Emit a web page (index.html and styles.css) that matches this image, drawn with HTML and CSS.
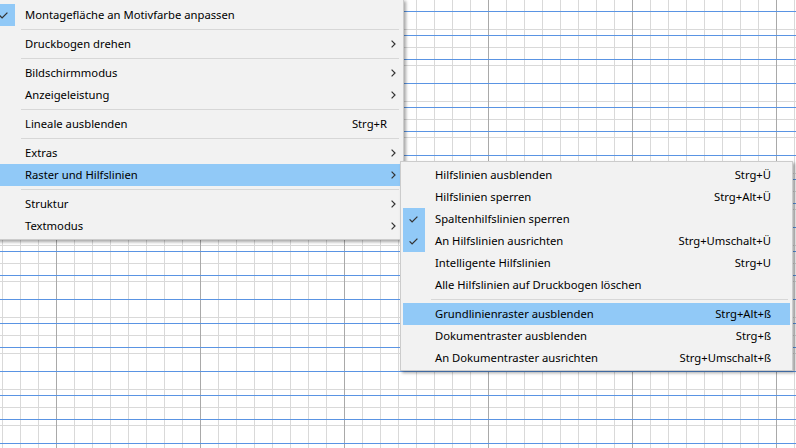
FILE: index.html
```html
<!DOCTYPE html>
<html lang="de">
<head>
<meta charset="utf-8">
<title>Menü</title>
<link rel="stylesheet" href="styles.css">
</head>
<body>
<div class="canvas">
  <svg class="grid" width="796" height="448" viewBox="0 0 796 448">
    <defs>
      <pattern id="gv" x="2" y="0" width="18" height="448" patternUnits="userSpaceOnUse"><rect x="0" y="0" width="1" height="448" fill="#d9d9d9"/></pattern>
      <pattern id="gh" x="0" y="11" width="796" height="18" patternUnits="userSpaceOnUse"><rect x="0" y="0" width="796" height="1" fill="#d9d9d9"/></pattern>
      <pattern id="mv" x="56" y="0" width="144" height="448" patternUnits="userSpaceOnUse"><rect x="0" y="0" width="1" height="448" fill="#a9a9a9"/></pattern>
      <pattern id="bl" x="0" y="11" width="796" height="24" patternUnits="userSpaceOnUse"><rect x="0" y="0" width="796" height="1" fill="#5a94e3"/></pattern>
    </defs>
    <rect width="796" height="448" fill="#ffffff"/>
    <rect width="796" height="448" fill="url(#gh)"/>
    <rect width="796" height="448" fill="url(#gv)"/>
    <rect width="796" height="448" fill="url(#mv)"/>
    <rect width="796" height="448" fill="url(#bl)"/>
  </svg>
  <div class="menu menu-main">
    <div class="item checked"><span class="chk"><svg width="9" height="7" viewBox="0 0 9 7"><polyline points="0.6,3.4 3.1,5.9 8.4,0.6"/></svg></span><span class="label">Montagefläche an Motivfarbe anpassen</span><span class="key"></span><span class="arr"></span></div>
    <div class="sep"></div>
    <div class="item"><span class="chk"></span><span class="label">Druckbogen drehen</span><span class="key"></span><span class="arr"><svg width="5" height="8" viewBox="0 0 5 8"><polyline points="0.6,0.6 4,4 0.6,7.4"/></svg></span></div>
    <div class="sep"></div>
    <div class="item"><span class="chk"></span><span class="label">Bildschirmmodus</span><span class="key"></span><span class="arr"><svg width="5" height="8" viewBox="0 0 5 8"><polyline points="0.6,0.6 4,4 0.6,7.4"/></svg></span></div>
    <div class="item"><span class="chk"></span><span class="label">Anzeigeleistung</span><span class="key"></span><span class="arr"><svg width="5" height="8" viewBox="0 0 5 8"><polyline points="0.6,0.6 4,4 0.6,7.4"/></svg></span></div>
    <div class="sep"></div>
    <div class="item"><span class="chk"></span><span class="label">Lineale ausblenden</span><span class="key">Strg+R</span><span class="arr"></span></div>
    <div class="sep"></div>
    <div class="item"><span class="chk"></span><span class="label">Extras</span><span class="key"></span><span class="arr"><svg width="5" height="8" viewBox="0 0 5 8"><polyline points="0.6,0.6 4,4 0.6,7.4"/></svg></span></div>
    <div class="item active"><span class="chk"></span><span class="label">Raster und Hilfslinien</span><span class="key"></span><span class="arr"><svg width="5" height="8" viewBox="0 0 5 8"><polyline points="0.6,0.6 4,4 0.6,7.4"/></svg></span></div>
    <div class="sep"></div>
    <div class="item"><span class="chk"></span><span class="label">Struktur</span><span class="key"></span><span class="arr"><svg width="5" height="8" viewBox="0 0 5 8"><polyline points="0.6,0.6 4,4 0.6,7.4"/></svg></span></div>
    <div class="item"><span class="chk"></span><span class="label">Textmodus</span><span class="key"></span><span class="arr"><svg width="5" height="8" viewBox="0 0 5 8"><polyline points="0.6,0.6 4,4 0.6,7.4"/></svg></span></div>
  </div>

  <div class="menu menu-sub">
    <div class="item"><span class="chk"></span><span class="label">Hilfslinien ausblenden</span><span class="key">Strg+Ü</span><span class="arr"></span></div>
    <div class="item"><span class="chk"></span><span class="label">Hilfslinien sperren</span><span class="key">Strg+Alt+Ü</span><span class="arr"></span></div>
    <div class="item checked"><span class="chk"><svg width="9" height="7" viewBox="0 0 9 7"><polyline points="0.6,3.4 3.1,5.9 8.4,0.6"/></svg></span><span class="label">Spaltenhilfslinien sperren</span><span class="key"></span><span class="arr"></span></div>
    <div class="item checked"><span class="chk"><svg width="9" height="7" viewBox="0 0 9 7"><polyline points="0.6,3.4 3.1,5.9 8.4,0.6"/></svg></span><span class="label">An Hilfslinien ausrichten</span><span class="key">Strg+Umschalt+Ü</span><span class="arr"></span></div>
    <div class="item"><span class="chk"></span><span class="label">Intelligente Hilfslinien</span><span class="key">Strg+U</span><span class="arr"></span></div>
    <div class="item"><span class="chk"></span><span class="label">Alle Hilfslinien auf Druckbogen löschen</span><span class="key"></span><span class="arr"></span></div>
    <div class="sep"></div>
    <div class="item active"><span class="chk"></span><span class="label">Grundlinienraster ausblenden</span><span class="key">Strg+Alt+ß</span><span class="arr"></span></div>
    <div class="item"><span class="chk"></span><span class="label">Dokumentraster ausblenden</span><span class="key">Strg+ß</span><span class="arr"></span></div>
    <div class="item"><span class="chk"></span><span class="label">An Dokumentraster ausrichten</span><span class="key">Strg+Umschalt+ß</span><span class="arr"></span></div>
  </div>
</div>
</body>
</html>
```
FILE: styles.css
```css
html, body {
  margin: 0;
  padding: 0;
}
body {
  width: 796px;
  height: 448px;
  overflow: hidden;
  font-family: "Noto Sans", "Open Sans", sans-serif;
  font-size: 11.25px;
  color: #000;
}
.canvas {
  position: relative;
  width: 796px;
  height: 448px;
  background: #fff;
}
.grid {
  position: absolute;
  left: 0;
  top: 0;
  display: block;
  shape-rendering: crispEdges;
}
.menu {
  position: absolute;
  box-sizing: border-box;
  background: #f2f2f2;
  border: 1px solid #cccccc;
  padding: 2px;
  box-shadow: 2px 2px 3px rgba(0, 0, 0, 0.35);
  display: flex;
  flex-direction: column;
}
.menu-main {
  left: -10px;
  top: -1px;
  width: 414px;
  padding-top: 4px;
}
.menu-sub {
  left: 400px;
  top: 161px;
  width: 393px;
  padding-bottom: 1px;
}
.item {
  display: flex;
  align-items: center;
  height: 22px;
  white-space: nowrap;
}
.item.active {
  background: #91c9f7;
}
.chk {
  flex: 0 0 22px;
  height: 22px;
  display: flex;
  align-items: center;
  justify-content: center;
}
.checked .chk {
  background: #91c9f7;
}
.chk svg {
  margin-left: -2px;
}
.chk polyline {
  fill: none;
  stroke: #333;
  stroke-width: 1.3;
}
.label {
  flex: 1 1 auto;
  margin-left: 10px;
  padding-bottom: 2px;
}
.key {
  flex: 0 0 auto;
  padding-bottom: 2px;
}
.arr {
  flex: 0 0 14px;
  height: 22px;
  display: flex;
  align-items: center;
  padding-left: 4px;
  box-sizing: border-box;
}
.menu-sub .arr {
  flex-basis: 19px;
}
.arr polyline {
  fill: none;
  stroke: #333;
  stroke-width: 1.2;
}
.sep {
  height: 1px;
  margin: 3px 2px 3px 28px;
  background: #d7d7d7;
}
```
